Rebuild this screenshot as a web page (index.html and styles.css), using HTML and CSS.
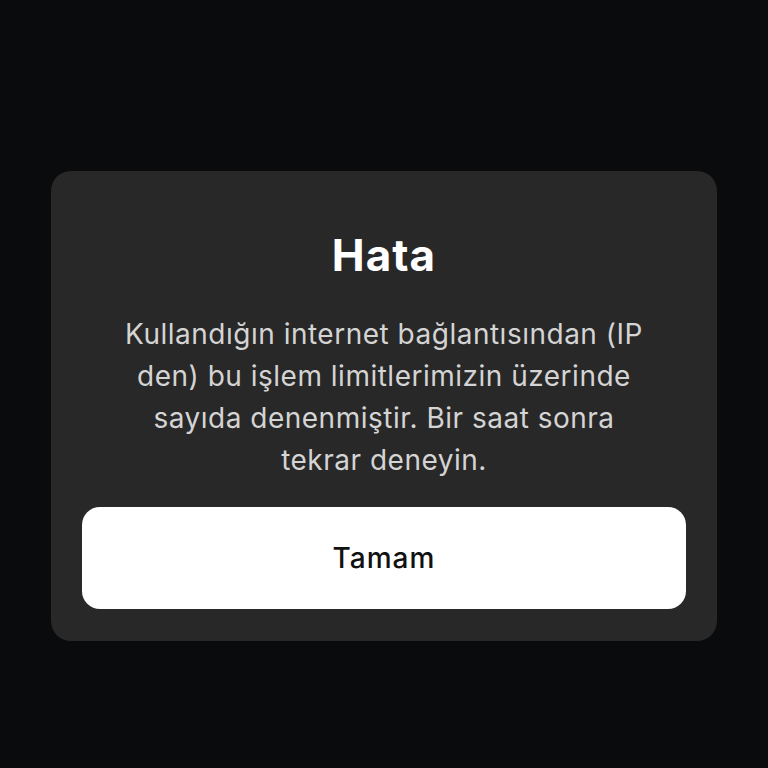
FILE: index.html
```html
<!DOCTYPE html>
<html lang="tr">
<head>
    <meta charset="UTF-8">
    <meta name="viewport" content="width=device-width, initial-scale=1.0">
    <title>Hata</title>
    <link rel="stylesheet" href="styles.css">
</head>
<body>
    <div class="dialog">
        <h1 class="dialog-title">Hata</h1>
        <p class="dialog-text">
            Kullandığın internet bağlantısından (IP den) bu işlem limitlerimizin üzerinde sayıda denenmiştir. Bir saat sonra tekrar deneyin.
        </p>
        <button class="dialog-button">Tamam</button>
    </div>
</body>
</html>
```

FILE: styles.css
```css
body, html {
    margin: 0;
    padding: 0;
    font-family: Inter, "Noto Sans", sans-serif;
}

body {
    background-color: #0a0b0d;
    min-height: 100vh;
    box-sizing: border-box;
    padding-top: 44px;
    display: flex;
    justify-content: center;
    align-items: center;
}

.dialog {
    width: 666px;
    height: 470px;
    box-sizing: border-box;
    background-color: #282828;
    border-radius: 20px;
    padding: 58px 31px 32px;
    display: flex;
    flex-direction: column;
    align-items: center;
}

.dialog-title {
    margin: 0;
    color: #ffffff;
    font-size: 44px;
    font-weight: 700;
    letter-spacing: 1px;
    line-height: 52px;
}

.dialog-text {
    margin: 32px 0 0;
    max-width: 536px;
    color: #d4d4d4;
    font-size: 28px;
    letter-spacing: 0.5px;
    line-height: 42px;
    text-align: center;
}

.dialog-button {
    margin-top: auto;
    width: 100%;
    height: 102px;
    border: none;
    border-radius: 18px;
    background-color: #ffffff;
    color: #111111;
    font-family: inherit;
    font-size: 28px;
    font-weight: 500;
    letter-spacing: 1px;
    cursor: pointer;
}
```
